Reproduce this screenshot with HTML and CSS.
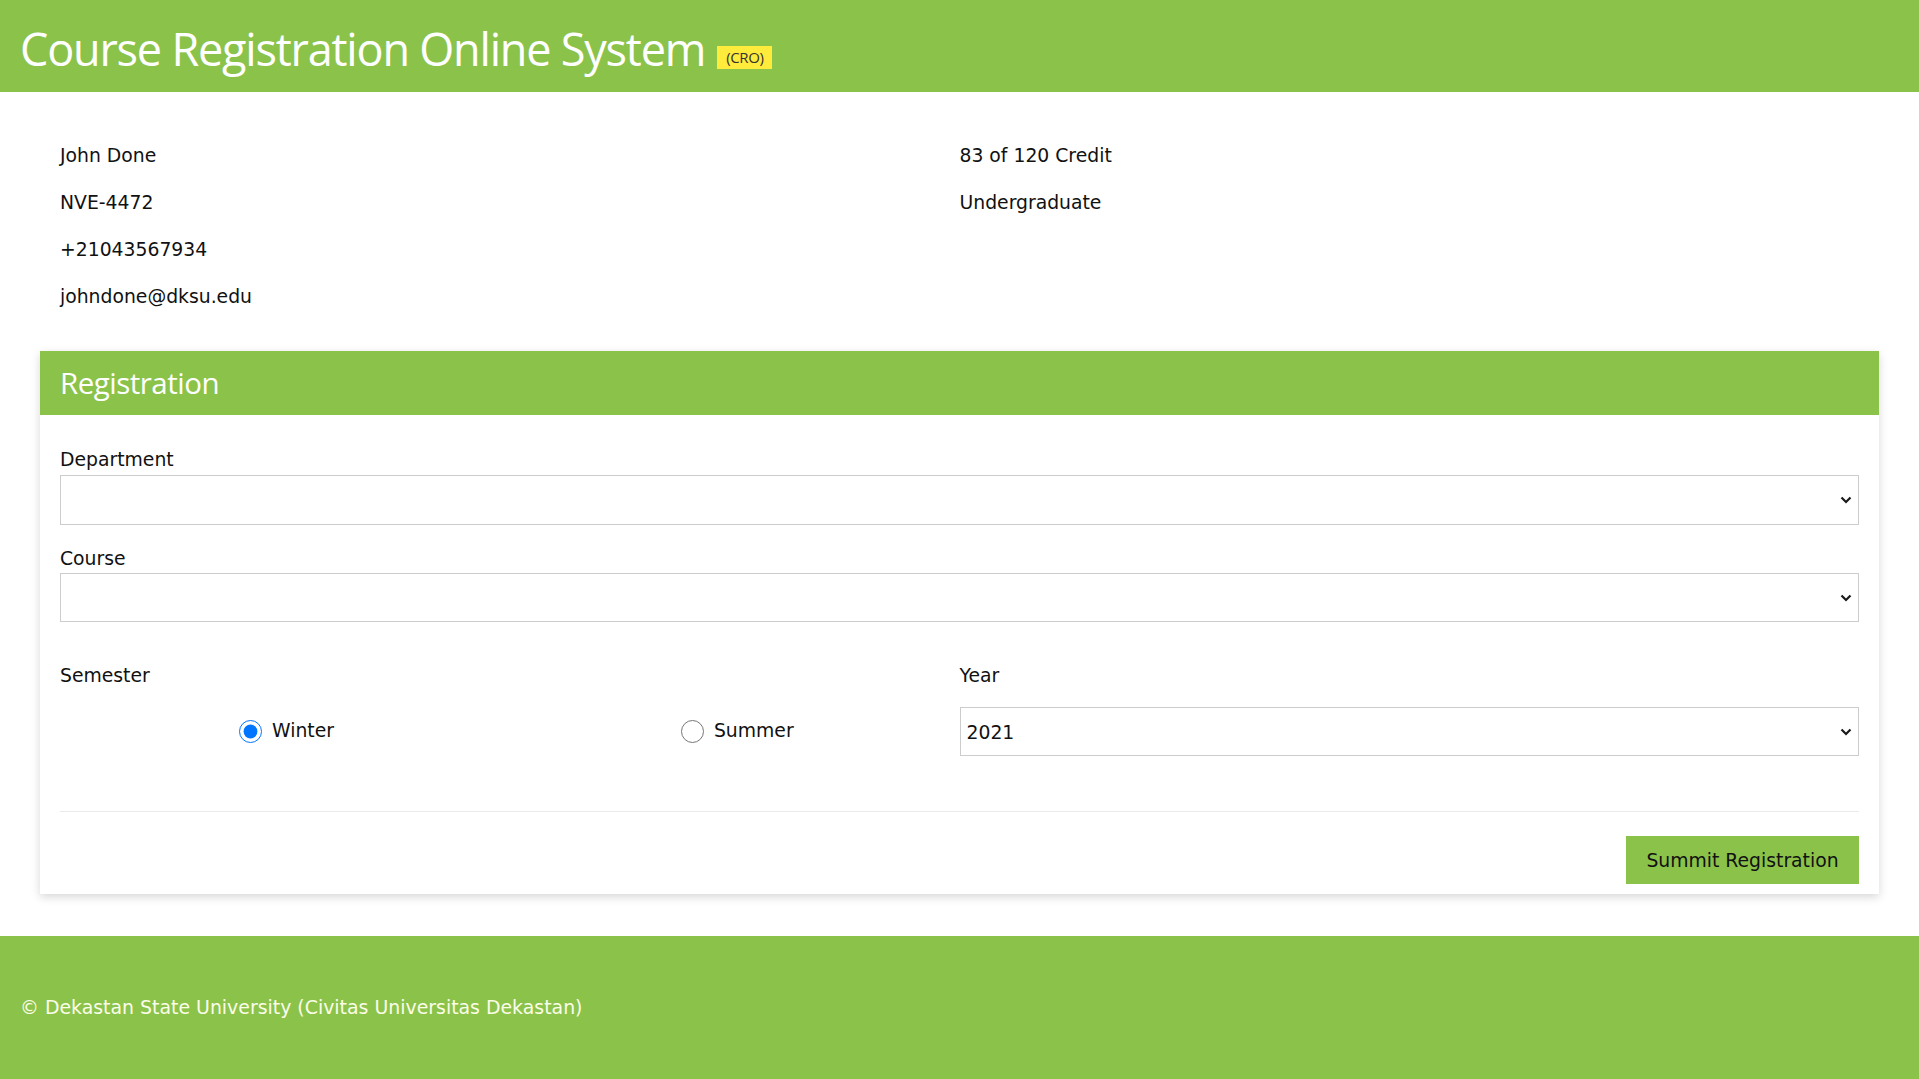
FILE: index.html
```html
<!DOCTYPE html>
<html lang="en">
<head>
<meta charset="utf-8">
<title>Course Registration Online System</title>
<link rel="stylesheet" href="styles.css">
</head>
<body>
<header class="topbar">
  <h1 class="title">Course Registration Online System</h1>
  <span class="badge">(CRO)</span>
</header>

<main class="main">
  <section class="info">
    <div class="info-col">
      <p class="info-row">John Done</p>
      <p class="info-row">NVE-4472</p>
      <p class="info-row">+21043567934</p>
      <p class="info-row">johndone@dksu.edu</p>
    </div>
    <div class="info-col">
      <p class="info-row">83 of 120 Credit</p>
      <p class="info-row">Undergraduate</p>
    </div>
  </section>

  <section class="card">
    <div class="card-head">Registration</div>
    <form class="card-body">
      <div class="group">
        <label class="label" for="dept">Department</label>
        <div class="select-wrap">
          <select id="dept" class="select"><option></option></select>
          <svg class="chev" width="12" height="8" viewBox="0 0 12 8"><path d="M1.5 1.5 L6 6 L10.5 1.5" fill="none" stroke="#1a1a1a" stroke-width="2.2"/></svg>
        </div>
      </div>
      <div class="group">
        <label class="label" for="course">Course</label>
        <div class="select-wrap">
          <select id="course" class="select select-course"><option></option></select>
          <svg class="chev" width="12" height="8" viewBox="0 0 12 8"><path d="M1.5 1.5 L6 6 L10.5 1.5" fill="none" stroke="#1a1a1a" stroke-width="2.2"/></svg>
        </div>
      </div>
      <div class="split">
        <div class="half">
          <div class="label">Semester</div>
          <div class="radios">
            <label class="radio"><input type="radio" name="sem" checked>Winter</label>
            <label class="radio"><input type="radio" name="sem">Summer</label>
          </div>
        </div>
        <div class="half">
          <label class="label label-year" for="year">Year</label>
          <div class="select-wrap">
            <select id="year" class="select select-year"><option>2021</option></select>
            <svg class="chev" width="12" height="8" viewBox="0 0 12 8"><path d="M1.5 1.5 L6 6 L10.5 1.5" fill="none" stroke="#1a1a1a" stroke-width="2.2"/></svg>
          </div>
        </div>
      </div>
      <hr class="rule">
      <div class="actions">
        <button type="button" class="btn">Summit Registration</button>
      </div>
    </form>
  </section>
</main>

<footer class="footer">
  <p class="foot-text">© Dekastan State University (Civitas Universitas Dekastan)</p>
</footer>
</body>
</html>
```

FILE: styles.css
```css
* { box-sizing: border-box; }

html, body {
  margin: 0;
  padding: 0;
}

body {
  font-family: "DejaVu Sans", Verdana, sans-serif;
  font-size: 18.8px;
  line-height: 28px;
  color: #111;
  background: #fff;
}

.topbar {
  background: #8bc34a;
  height: 92px;
  display: flex;
  align-items: center;
  padding: 0 20px;
  gap: 12px;
}

.title {
  margin: 0;
  font-family: "Open Sans", "Noto Sans", sans-serif;
  font-weight: 400;
  font-size: 45px;
  letter-spacing: -1.2px;
  line-height: 1;
  color: #fff;
  position: relative;
  top: 2px;
}

.badge {
  background: #ffeb3b;
  color: #333;
  font-family: "Open Sans", "Noto Sans", sans-serif;
  font-size: 15px;
  line-height: 23px;
  padding: 0 9px;
  margin-top: 23px;
  letter-spacing: -0.4px;
}

.main {
  padding: 0 40px;
}

.info {
  display: grid;
  grid-template-columns: 1fr 1fr;
  padding: 50px 20px 21px;
}

.info-row {
  margin: 0 0 19px;
  line-height: 28px;
}

.card {
  background: #fff;
  box-shadow: 0 3px 9px rgba(0, 0, 0, 0.16);
}

.card-head {
  background: #8bc34a;
  color: #fff;
  height: 64px;
  display: flex;
  align-items: center;
  padding: 0 20px;
  font-family: "Open Sans", "Noto Sans", sans-serif;
  font-size: 29.5px;
  letter-spacing: -0.5px;
}

.card-body {
  padding: 31px 20px 10px;
  margin: 0;
}

.group {
  margin-bottom: 20px;
}

.label {
  display: block;
  line-height: 28px;
  margin-bottom: 1px;
}

.select-wrap {
  position: relative;
}

.select {
  display: block;
  width: 100%;
  height: 50px;
  border: 1px solid #cccccc;
  border-radius: 0;
  background: #fff;
  font-family: "DejaVu Sans", Verdana, sans-serif;
  font-size: 18.8px;
  color: #111;
  padding: 0 6px;
  appearance: none;
  -webkit-appearance: none;
}

.select-course {
  height: 49px;
  margin-top: -1px;
}

.chev {
  position: absolute;
  right: 7px;
  top: 50%;
  margin-top: -4px;
  pointer-events: none;
}

.split {
  display: grid;
  grid-template-columns: 1fr 1fr;
  padding-top: 20px;
}

.label-year { margin-bottom: 17px; }

.select-year {
  height: 49px;
  padding-top: 2px;
}

.radios {
  display: flex;
  gap: 347px;
  padding: 26px 0 0 179px;
}

.radio {
  display: flex;
  align-items: center;
  line-height: 28px;
}

.radio input {
  width: 23px;
  height: 23px;
  margin: 0 10px 0 0;
  accent-color: #0075ff;
}

.rule {
  border: 0;
  border-top: 1px solid #eaeaea;
  margin: 55px 0 24px;
}

.actions {
  display: flex;
  justify-content: flex-end;
}

.btn {
  background: #8bc34a;
  border: 0;
  border-radius: 0;
  height: 48px;
  width: 233px;
  font-family: "DejaVu Sans", Verdana, sans-serif;
  font-size: 18.8px;
  color: #111;
  padding: 0;
}

.footer {
  background: #8bc34a;
  margin-top: 42px;
  height: 144px;
  display: flex;
  align-items: center;
  padding: 0 20px;
}

.foot-text {
  margin: 0;
  color: #fbfde9;
  font-size: 18.9px;
  position: relative;
  top: -1px;
}
```
